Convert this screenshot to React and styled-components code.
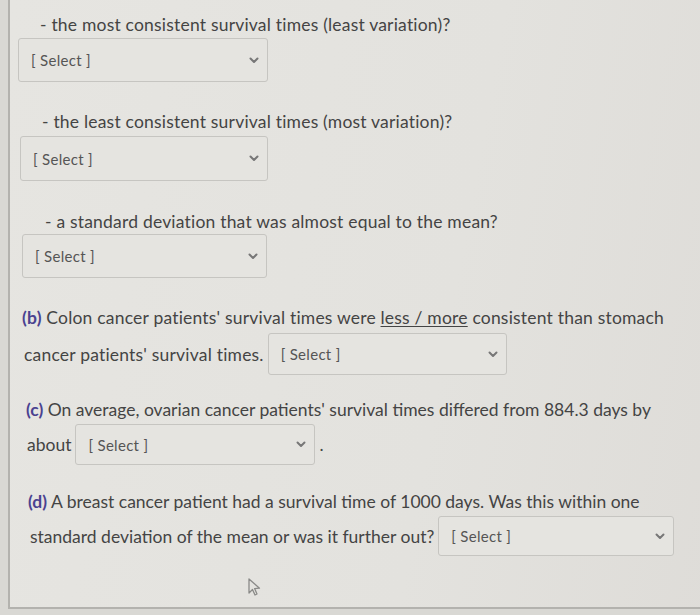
import React from "react";
import styled, { createGlobalStyle } from "styled-components";

const GlobalStyle = createGlobalStyle`
  html, body {
    margin: 0;
    padding: 0;
    background: #d9d8d4;
  }
  body {
    font-family: Lato, "Open Sans", Arial, sans-serif;
    color: #444;
  }
`;

const Page = styled.div`
  width: 700px;
  height: 615px;
  overflow: hidden;
  background: #d9d8d4;
`;

const Panel = styled.div`
  position: relative;
  margin-left: 8px;
  width: 720px;
  height: 609px;
  box-sizing: border-box;
  padding-top: 14px;
  background: linear-gradient(100deg, #e6e5e1 0%, #e3e2de 60%, #dedcd8 100%);
  border-left: 2px solid #b3b2ae;
  border-bottom: 2px solid #b3b2ae;
`;

const Prompt = styled.div`
  font-size: 17.5px;
  line-height: 22px;
  height: 22px;
  white-space: nowrap;
  padding-left: ${(p) => p.$indent}px;
  margin-top: ${(p) => p.$top || 0}px;
  letter-spacing: ${(p) => (p.$tight ? 0 : 0.2)}px;
`;

const Row = styled.div`
  display: flex;
  align-items: center;
  gap: 4px;
  padding-left: ${(p) => p.$indent}px;
  margin-top: ${(p) => p.$top || 0}px;
  font-size: 17.5px;
  white-space: nowrap;
  letter-spacing: ${(p) => (p.$tight ? 0 : 0.2)}px;
`;

const Label = styled.b`
  font-weight: 700;
  color: #4a4290;
`;

const Choice = styled.span`
  text-decoration: underline;
  text-underline-offset: 2px;
`;

const SelectBox = styled.div`
  display: flex;
  align-items: center;
  justify-content: space-between;
  box-sizing: border-box;
  width: ${(p) => p.$w}px;
  height: ${(p) => p.$h || 44}px;
  padding: 0 8px 0 12px;
  margin-left: ${(p) => p.$left || 0}px;
  margin-top: ${(p) => p.$top || 0}px;
  border: 1px solid #c6c5c1;
  border-radius: 3px;
  background: #e5e4e0;
  font-size: 15px;
  letter-spacing: 0.3px;
  color: #555;
`;

const Chevron = () => (
  <svg width="10" height="7" viewBox="0 0 10 7">
    <path d="M1.5 1.5 L5 5 L8.5 1.5" fill="none" stroke="#777" strokeWidth="2" strokeLinecap="round" strokeLinejoin="round" />
  </svg>
);

const Select = (props) => (
  <SelectBox {...props}>
    <span>[ Select ]</span>
    <Chevron />
  </SelectBox>
);

const Cursor = styled.svg`
  position: absolute;
  left: 236px;
  top: 578px;
`;

export default function App() {
  return (
    <Page>
      <GlobalStyle />
      <Panel>
        <Prompt $indent={30}>- the most consistent survival times (least variation)?</Prompt>
        <Select $w={250} $left={8} $top={2} />

        <Prompt $indent={32} $top={29}>- the least consistent survival times (most variation)?</Prompt>
        <Select $w={248} $left={10} $top={3} $h={45} />

        <Prompt $indent={35} $top={30}>- a standard deviation that was almost equal to the mean?</Prompt>
        <Select $w={245} $left={12} $top={1} />

        <Prompt $indent={12} $top={29}>
          <Label>(b)</Label> Colon cancer patients' survival times were <Choice>less / more</Choice> consistent than stomach
        </Prompt>
        <Row $indent={14} $top={4}>
          <span>cancer patients' survival times.</span>
          <Select $w={239} $h={42} />
        </Row>

        <Prompt $indent={16} $top={24} $tight>
          <Label>(c)</Label> On average, ovarian cancer patients' survival times differed from 884.3 days by
        </Prompt>
        <Row $indent={17} $top={3} $tight>
          <span>about</span>
          <Select $w={240} $h={41} />
          <span>.</span>
        </Row>

        <Prompt $indent={18} $top={26} $tight>
          <Label>(d)</Label> A breast cancer patient had a survival time of 1000 days. Was this within one
        </Prompt>
        <Row $indent={20} $top={3} $tight>
          <span>standard deviation of the mean or was it further out?</span>
          <Select $w={236} $h={40} />
        </Row>

        <Cursor width="16" height="20" viewBox="0 0 16 20">
          <path
            d="M3 1 L3 15 L6.5 11.5 L9 17 L11 16 L8.6 10.6 L13.5 10.2 Z"
            fill="#e4e3df"
            stroke="#8a8a88"
            strokeWidth="1.3"
            strokeLinejoin="round"
          />
        </Cursor>
      </Panel>
    </Page>
  );
}
